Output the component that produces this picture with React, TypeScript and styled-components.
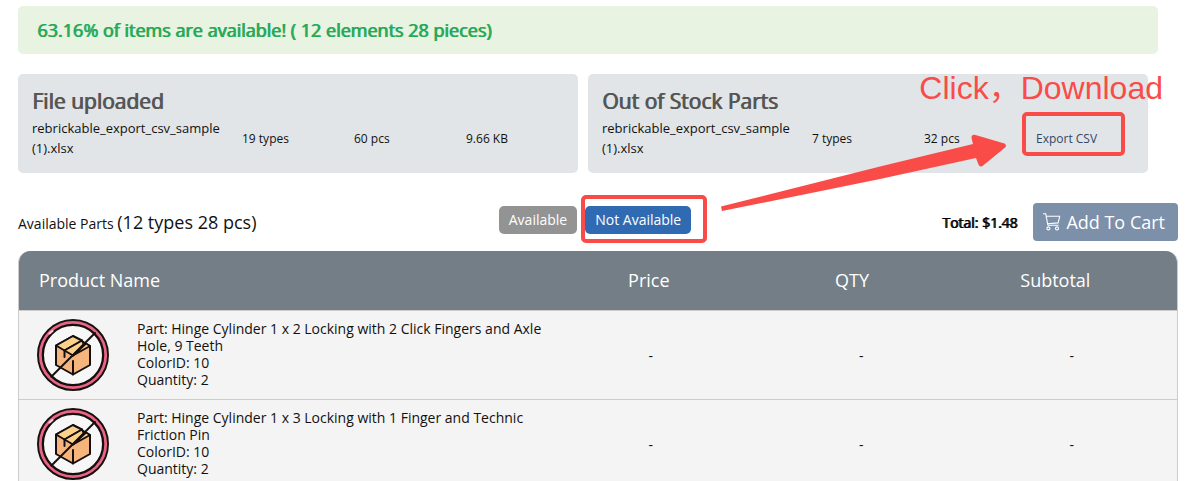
import React from "react";
import styled, { createGlobalStyle } from "styled-components";

const GlobalStyle = createGlobalStyle`
  * { box-sizing: border-box; }
  body {
    margin: 0;
    background: #fff;
    color: #111;
    font-family: "Open Sans", "Noto Sans", sans-serif;
    font-size: 14px;
  }
`;

const Page = styled.main`
  position: relative;
  padding: 6px 13px 0 18px;
`;

const Banner = styled.p`
  margin: 0 20px 0 0;
  padding: 12px 19px;
  border-radius: 5px;
  background: #e8f3e2;
  color: #26a957;
  font-size: 18px;
  line-height: 24px;
  font-weight: 400;
  text-shadow: 1px 0 0 #26a957;
`;

const Cards = styled.div`
  display: grid;
  grid-template-columns: 1fr 1fr;
  gap: 10px;
  margin: 20px 30px 0 0;
`;

const Card = styled.section`
  padding: 14px 0 14px 14px;
  border-radius: 5px;
  background: #e1e5e8;
`;

const CardTitle = styled.h2`
  margin: 0 0 4px;
  color: #555;
  font-size: 21px;
  line-height: 26px;
  font-weight: 400;
  text-shadow: 1px 0 0 #555;
`;

const CardRow = styled.div`
  display: grid;
  grid-template-columns: 15fr 8fr 8fr 8fr;
  align-items: center;
  padding-bottom: 1px;
  font-size: 12px;
  line-height: 22px;
`;

const FileName = styled.span`
  padding-right: 8px;
  font-size: 13px;
  line-height: 20px;
`;

const Meta = styled.span`
  padding-top: 2px;
`;

const Marked = styled.span`
  position: relative;
  justify-self: start;
`;

const MarkedMeta = styled(Marked)`
  padding-top: 2px;
`;

const ExportLink = styled.a`
  color: #344767;
  text-decoration: none;
`;

const Frame = styled.span<{ $inset: string }>`
  position: absolute;
  inset: ${(p) => p.$inset};
  border: 4px solid #f94c48;
  border-radius: 5px;
  pointer-events: none;
`;

const Toolbar = styled.div`
  display: grid;
  grid-template-columns: 1fr auto 1fr;
  align-items: center;
  margin: 30px 0 10px;
`;

const Summary = styled.div`
  padding-top: 2px;
  font-size: 14px;
  line-height: 26px;
`;

const SummaryCount = styled.span`
  font-size: 18px;
`;

const Filters = styled.div`
  display: flex;
  gap: 8px;
  padding: 0 6px 4px 0;
`;

const FilterButton = styled.button<{ $active?: boolean }>`
  height: 28px;
  padding: 0 10px;
  border: 0;
  border-radius: 5px;
  background: ${(p) => (p.$active ? "#2f6ab3" : "#939393")};
  color: #fff;
  font: 14px/28px "Open Sans", "Noto Sans", sans-serif;
  cursor: pointer;
`;

const Checkout = styled.div`
  display: flex;
  justify-content: flex-end;
  align-items: center;
  gap: 16px;
`;

const Total = styled.strong`
  color: #000;
  font-size: 14px;
  font-weight: 400;
  text-shadow: 1px 0 0 #000;
`;

const CartButton = styled.button`
  display: flex;
  align-items: center;
  gap: 5px;
  height: 38px;
  padding: 0 13px 0 10px;
  border: 0;
  border-radius: 4px;
  background: #7d90aa;
  color: #fff;
  font: 18px/24px "Open Sans", "Noto Sans", sans-serif;
  cursor: pointer;
`;

const PartsTable = styled.table`
  display: block;
  border: 1px solid #ccc;
  border-width: 0 1px;
  border-radius: 12px 12px 0 0;
  background: #f4f4f4;
  overflow: hidden;

  thead,
  tbody {
    display: block;
  }
`;

const TableRow = styled.tr`
  display: grid;
  grid-template-columns: 5fr 2fr 2fr 2fr;
  align-items: center;
  min-height: 89px;
  border-bottom: 1px solid #ccc;
`;

const HeadRow = styled(TableRow)`
  min-height: 60px;
  padding: 0 20px 2px;
  background: #747e86;
  color: #fff;
`;

const HeadCell = styled.th<{ $first?: boolean }>`
  padding: 0;
  font-size: 18px;
  line-height: 26px;
  font-weight: 400;
  text-align: ${(p) => (p.$first ? "left" : "center")};
`;

const PartCell = styled.td`
  display: flex;
  align-items: center;
  gap: 28px;
  padding: 0 0 0 18px;
  line-height: 17px;
`;

const ValueCell = styled.td`
  padding: 0;
  text-align: center;
`;

const PartText = styled.div`
  flex: 1;
  padding-bottom: 2px;
`;

const Note = styled.div`
  position: absolute;
  top: 70px;
  right: 28px;
  color: #f94c48;
  font: 32px/36px "Liberation Sans", "Noto Sans CJK SC", sans-serif;
  white-space: nowrap;
`;

const Arrow = styled.svg`
  position: absolute;
  top: 130px;
  right: 181px;
  pointer-events: none;
`;

function CartIcon() {
  return (
    <svg width="18" height="18" viewBox="0 0 18 18" fill="none" stroke="#fff" strokeWidth="1.1" aria-hidden="true">
      <path d="M0 .7h2.700l2.200 11.600M3.400 3.300h13.300l-1.600 6.600-10.600.9M4.900 12.300h10.600" />
      <circle cx="5.4" cy="15.4" r="1.5" />
      <circle cx="14" cy="15.4" r="1.5" />
    </svg>
  );
}

function NoStockIcon() {
  return (
    <svg width="72" height="72" viewBox="0 0 72 72" fill="none" strokeLinejoin="round" strokeLinecap="round" role="img" aria-label="Out of stock">
      <circle cx="36" cy="36" r="32.500" fill="#f7f7f7" stroke="#15100f" strokeWidth="7" />
      <circle cx="36" cy="36" r="32.700" stroke="#ea6485" strokeWidth="2.800" />
      <g stroke="#15100f" strokeWidth="2">
        <path d="M19 26.500 36 17 53 27v19L36 55.500 19 46z" fill="#f6b57c" />
        <path d="M19 26.500 36 17 45 21.500 27.500 31.500z" fill="#fbd18b" />
        <path d="M27.500 31.500 45 21.500 47 25.500 36 36.500z" fill="#fbd18b" />
        <path d="M36 36.500 49 24.500 53 27z" fill="#fbd18b" />
        <path d="M27.500 38v-6.500M36 42v13.500" />
        <path d="M14.500 57.500 58 14" />
      </g>
      <path d="m12.500 14.500 3-2.500" stroke="#f7d5dd" strokeWidth="2" />
    </svg>
  );
}

const cards = [
  { title: "File uploaded", types: "19 types", pieces: "60 pcs", size: "9.66 KB" },
  { title: "Out of Stock Parts", types: "7 types", pieces: "32 pcs" },
];

const parts = [
  { name: "Hinge Cylinder 1 x 2 Locking with 2 Click Fingers and Axle Hole, 9 Teeth", color: 10, quantity: 2 },
  { name: "Hinge Cylinder 1 x 3 Locking with 1 Finger and Technic Friction Pin", color: 10, quantity: 2 },
];

export default function App() {
  return (
    <Page>
      <GlobalStyle />
      <Banner>63.16% of items are available! ( 12 elements 28 pieces)</Banner>
      <Cards>
        {cards.map((card) => (
          <Card key={card.title}>
            <CardTitle>{card.title}</CardTitle>
            <CardRow>
              <FileName>rebrickable_export_csv_sample (1).xlsx</FileName>
              <Meta>{card.types}</Meta>
              <Meta>{card.pieces}</Meta>
              {card.size ? (
                <Meta>{card.size}</Meta>
              ) : (
                <MarkedMeta>
                  <ExportLink href="#export">Export CSV</ExportLink>
                  <Frame $inset="-14px -28px -6px -14px" />
                </MarkedMeta>
              )}
            </CardRow>
          </Card>
        ))}
      </Cards>
      <Toolbar>
        <Summary>
          Available Parts <SummaryCount>(12 types 28 pcs)</SummaryCount>
        </Summary>
        <Filters>
          <FilterButton type="button">Available</FilterButton>
          <Marked>
            <FilterButton type="button" $active>
              Not Available
            </FilterButton>
            <Frame $inset="-11px -16px -9px -4px" />
          </Marked>
        </Filters>
        <Checkout>
          <Total>Total: $1.48</Total>
          <CartButton type="button">
            <CartIcon />
            Add To Cart
          </CartButton>
        </Checkout>
      </Toolbar>
      <PartsTable>
        <thead>
          <HeadRow>
            <HeadCell $first>Product Name</HeadCell>
            <HeadCell>Price</HeadCell>
            <HeadCell>QTY</HeadCell>
            <HeadCell>Subtotal</HeadCell>
          </HeadRow>
        </thead>
        <tbody>
          {parts.map((part) => (
            <TableRow key={part.name}>
              <PartCell>
                <NoStockIcon />
                <PartText>
                  <div>{`Part: ${part.name}`}</div>
                  <div>{`ColorID: ${part.color}`}</div>
                  <div>{`Quantity: ${part.quantity}`}</div>
                </PartText>
              </PartCell>
              <ValueCell>-</ValueCell>
              <ValueCell>-</ValueCell>
              <ValueCell>-</ValueCell>
            </TableRow>
          ))}
        </tbody>
      </PartsTable>
      <Note>Click，Download</Note>
      <Arrow width="290" height="84" viewBox="720 130 290 84" aria-hidden="true">
        <path d="M721 206.500 880 166.500 973 144 971.500 138q0-4 4-3l29 8.500q3 2 0 4.500l-22 18q-3 1.500-4-1.500l-2.500-6.500L880 179 722 211z" fill="#f94c48" />
      </Arrow>
    </Page>
  );
}
